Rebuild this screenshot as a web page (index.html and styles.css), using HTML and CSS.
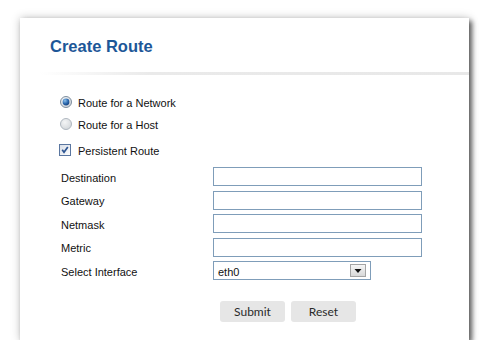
FILE: index.html
```html
<!DOCTYPE html>
<html>
<head>
<meta charset="utf-8">
<link rel="stylesheet" href="styles.css">
</head>
<body>
<div class="panel">
  <div class="head"><h1 class="title">Create Route</h1></div>
  <div class="sep"></div>
  <div class="body">
    <div class="options">
      <div class="opt">
        <svg class="radio" width="12" height="12" viewBox="0 0 12 12">
          <defs>
            <radialGradient id="rg1" cx="0.4" cy="0.35" r="0.7">
              <stop offset="0" stop-color="#ffffff"/>
              <stop offset="1" stop-color="#c9d0d8"/>
            </radialGradient>
            <radialGradient id="dot" cx="0.35" cy="0.3" r="0.75">
              <stop offset="0" stop-color="#8cc0ec"/>
              <stop offset="0.6" stop-color="#2b68ad"/>
              <stop offset="1" stop-color="#17427e"/>
            </radialGradient>
          </defs>
          <circle cx="6" cy="6" r="5.5" fill="url(#rg1)" stroke="#7e8e9e"/>
          <circle cx="6" cy="6" r="3.4" fill="url(#dot)"/>
        </svg>
        <span>Route for a Network</span>
      </div>
      <div class="opt">
        <svg class="radio" width="12" height="12" viewBox="0 0 12 12">
          <defs>
            <radialGradient id="rg2" cx="0.4" cy="0.35" r="0.7">
              <stop offset="0" stop-color="#f4f5f6"/>
              <stop offset="1" stop-color="#d2d6da"/>
            </radialGradient>
          </defs>
          <circle cx="6" cy="6" r="5.5" fill="url(#rg2)" stroke="#b0b8c0"/>
        </svg>
        <span>Route for a Host</span>
      </div>
      <div class="opt chk">
        <svg class="check" width="12" height="12" viewBox="0 0 12 12">
          <defs>
            <linearGradient id="cg" x1="0" y1="0" x2="1" y2="1">
              <stop offset="0" stop-color="#d6dce6"/>
              <stop offset="1" stop-color="#ffffff"/>
            </linearGradient>
          </defs>
          <rect x="0.5" y="0.5" width="11" height="11" fill="url(#cg)" stroke="#5a76a0"/>
          <path d="M3.2 5.8 L5 8.2 L8.8 3" fill="none" stroke="#2d5592" stroke-width="1.7"/>
        </svg>
        <span>Persistent Route</span>
      </div>
    </div>
    <div class="form">
      <label class="lbl">Destination</label><div class="field"></div>
      <label class="lbl">Gateway</label><div class="field"></div>
      <label class="lbl">Netmask</label><div class="field"></div>
      <label class="lbl">Metric</label><div class="field"></div>
      <label class="lbl">Select Interface</label>
      <div class="select"><span>eth0</span>
        <span class="dd"><svg width="8" height="5" viewBox="0 0 8 5"><path d="M0.5 0 H7.5 L4 4 Z" fill="#111"/></svg></span>
      </div>
    </div>
    <div class="buttons">
      <button class="btn">Submit</button>
      <button class="btn">Reset</button>
    </div>
  </div>
</div>
</body>
</html>
```
FILE: styles.css
```css
html, body { margin: 0; padding: 0; background: #fff; }
body { font-family: "Liberation Sans", Arial, sans-serif; font-size: 11px; color: #111; }
.panel {
  box-sizing: border-box;
  width: 449px; height: 322px;
  margin: 18px 0 0 20px;
  background: #fff;
  box-shadow: 3px 3px 5px rgba(0,0,0,0.6), 0 0 9px rgba(0,0,0,0.22);
}
.head { box-sizing: border-box; height: 54px; padding: 18px 0 0 30px; }
.title {
  margin: 0; font-size: 16.5px; line-height: 20px; font-weight: bold;
  color: #1d5798; font-family: "Liberation Sans", Arial, sans-serif;
}
.sep { height: 3px; background: linear-gradient(to right, #ffffff 20px, #eaeaea 130px, #e8e8e8); }
.body { padding: 15.5px 0 0 40px; }
.options { display: flex; flex-direction: column; }
.opt { display: flex; align-items: center; height: 22px; gap: 6px; }
.opt span { position: relative; top: 1px; }
.chk { margin-top: 4px; gap: 6px; margin-left: -1px; }
.chk span { margin-left: 1px; }
.radio, .check { display: block; flex: none; }
.form {
  display: grid; grid-template-columns: 153px 209px; grid-auto-rows: 19px;
  row-gap: 4.5px; margin-top: 6.5px;
}
.lbl { padding-left: 1px; display: flex; align-items: center; padding-top: 2px; }
.field { box-sizing: border-box; border: 1px solid #7f9db9; background: #fff; }
.select {
  box-sizing: border-box; width: 158px; border: 1px solid #7f9db9;
  display: flex; align-items: center; justify-content: space-between;
  padding: 0 4px 0 4px;
}
.select span:first-child { position: relative; top: 1px; }
.dd {
  box-sizing: border-box; width: 16px; height: 13px;
  border: 1px solid #a4a4a4; background: linear-gradient(#f6f6f6, #d8d8d8);
  display: flex; align-items: center; justify-content: center;
}
.dd svg { display: block; margin-top: 2px; }
.buttons { display: flex; gap: 6px; margin-top: 21px; padding-left: 160px; }
.btn {
  width: 65px; height: 21px; border: none; border-radius: 3px;
  background: #e6e6e6; color: #2a2a2a; padding: 0;
  font-family: "Lato", sans-serif; font-size: 12px;
}
```
